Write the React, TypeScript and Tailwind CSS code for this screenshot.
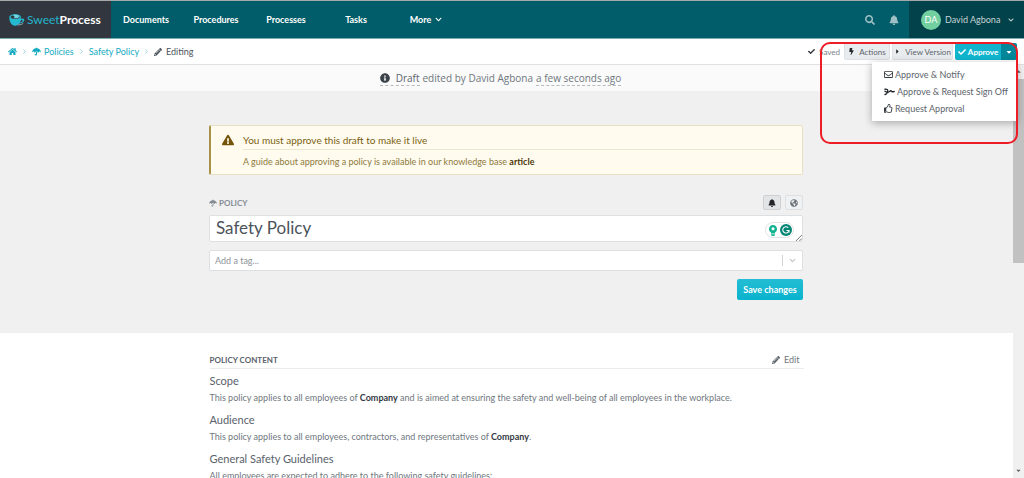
import React from "react";
import {
  FaHome, FaUmbrella, FaPencilAlt, FaChevronDown, FaSearch, FaBell, FaCheck, FaBolt, FaCaretRight,
  FaCaretDown, FaCaretUp, FaRegEnvelope, FaRegThumbsUp, FaInfoCircle, FaExclamationTriangle, FaGlobeAmericas,
} from "react-icons/fa";
import { ChevronDown, ChevronRight } from "lucide-react";

const navItems = ["Documents", "Procedures", "Processes", "Tasks"];

const sections = [
  {
    title: "Scope",
    body: (
      <>
        This policy applies to all employees of <b className="text-[#343a42]">Company</b> and is aimed at ensuring the
        safety and well-being of all employees in the workplace.
      </>
    ),
  },
  {
    title: "Audience",
    body: (
      <>
        This policy applies to all employees, contractors, and representatives of{" "}
        <b className="text-[#343a42]">Company</b>.
      </>
    ),
  },
  {
    title: "General Safety Guidelines",
    body: <>All employees are expected to adhere to the following safety guidelines:</>,
  },
];

function Logo() {
  return (
    <a href="#" aria-label="SweetProcess" className="flex w-[111px] items-center bg-[#32373f] pl-[9px] text-[12px] text-[#22b3cb]">
      <svg viewBox="0 0 48 36" className="mr-[2px] h-3 w-4 shrink-0" aria-hidden="true">
        <path d="M1 10C1 4 9 1 18 1c10 0 18 3 18 9 0 2-1 4-1 5 4-3 11-2 11 3 0 6-8 10-16 11-3 4-8 6-13 6C8 35 1 24 1 10Z" fill="#25b9d0" />
        <path d="M5 9c0-3 5-5 12-5 8 0 15 2 15 5 0 4-6 6-14 6C11 15 5 13 5 9Z" fill="#32373f" />
        <path d="M10 3c9-4 22-1 20 5-2 5-11 6-17 4 6-1 5-5-3-9Z" fill="#6fd3e2" />
        <path d="M36 19c3-2 6-1 5 1-1 3-5 5-9 6 2-2 3-4 4-7Z" fill="#32373f" />
        <path d="M26 31c6-1 13-1 18-5-2 6-10 9-20 8Z" fill="#8b969c" />
      </svg>
      <span>Sweet</span>
      <b className="text-white">Process</b>
    </a>
  );
}

function Header() {
  return (
    <header className="flex h-[39px] shrink-0 border-b border-t border-b-[#7fa9ae] border-t-[#a5a9aa] bg-[#015d69] text-white">
      <Logo />
      <nav className="flex font-bold">
        {navItems.map((n) => (
          <a key={n} href="#" className="flex w-[70px] items-center justify-center">
            {n}
          </a>
        ))}
        <button className="flex w-[70px] items-center justify-center gap-1 font-bold">
          More <FaChevronDown className="size-[7px]" />
        </button>
      </nav>
      <div className="ml-auto flex items-center gap-[14px] pr-[10px] text-[#9fc0c4]">
        <button aria-label="Search"><FaSearch className="size-[10px]" /></button>
        <button aria-label="Notifications"><FaBell className="size-[10px]" /></button>
      </div>
      <button className="flex w-[115px] items-center bg-[#02434b] pl-3 text-[#c5d3d5]">
        <span className="mr-1 flex size-5 items-center justify-center rounded-full bg-[#72cfa0] text-white">DA</span>
        David Agbona
        <FaChevronDown className="ml-[8px] size-[6px]" />
      </button>
    </header>
  );
}

function Crumb() {
  return <ChevronRight className="mx-1 size-[7px] text-[#8ccbd6]" strokeWidth={3} />;
}

function SignOffIcon() {
  return (
    <svg viewBox="0 0 22 16" className="h-2 w-[11px]" fill="none" stroke="#22262b" strokeLinecap="round" strokeLinejoin="round" aria-hidden="true">
      <path d="M2 2.500c4-1 6 1 5.500 4S5 12.500 2 13" strokeWidth="2.600" />
      <path d="M2 6.500c3 2.500 6 2.500 9 .5 2.500-2 3.500-2.500 3.500-1s1 2 6 1" strokeWidth="2.600" />
    </svg>
  );
}

function ApproveMenu() {
  const item = "flex h-[17px] w-full items-center gap-[2px] pl-3 text-left hover:bg-[#f2f4f5]";
  return (
    <div className="absolute right-0 top-[19px] z-10 w-[145px] bg-white py-1 text-[9px] text-[#5c646c] shadow-[0_2px_8px_rgba(0,0,0,0.3)]">
      <button className={item}><FaRegEnvelope className="size-[9px] text-[#33383e]" />Approve &amp; Notify</button>
      <button className={item}><SignOffIcon />Approve &amp; Request Sign Off</button>
      <button className={item}><FaRegThumbsUp className="size-[9px] text-[#33383e]" />Request Approval</button>
    </div>
  );
}

function Toolbar() {
  const grey = "flex h-[17px] items-center justify-center gap-1 rounded-[2px] border border-[#dde1e5] bg-[#e9ecef] whitespace-nowrap text-[8px] text-[#5c646c]";
  return (
    <div className="flex h-[26px] shrink-0 items-center border-b border-[#dfe1e3] bg-white pl-2 pr-[7px] text-[#14abc2]">
      <nav aria-label="Breadcrumb" className="flex items-center">
        <a href="#" aria-label="Home"><FaHome className="size-[9px]" /></a>
        <Crumb />
        <a href="#" className="flex items-center gap-[3px]"><FaUmbrella className="size-[9px]" />Policies</a>
        <Crumb />
        <a href="#">Safety Policy</a>
        <Crumb />
        <span className="flex items-center gap-1 text-[#4b535b]"><FaPencilAlt className="size-[8px]" />Editing</span>
      </nav>
      <div className="relative ml-auto flex items-center">
        <span className="mr-1 flex items-center gap-1 text-[8px] text-[#7b838a]"><FaCheck className="size-[7px] text-[#33383e]" />Saved</span>
        <button className={`${grey} mr-[2px] w-[46px]`}><FaBolt className="size-[7px] text-[#22262a]" />Actions</button>
        <button className={`${grey} mr-[2px] w-[61px]`}><FaCaretRight className="size-[7px] text-[#22262a]" />View Version</button>
        <button className="flex h-[17px] w-[46px] items-center justify-center gap-[2px] rounded-l-[2px] bg-[#10b5cd] text-[8px] font-bold text-white"><FaCheck className="size-[8px]" />Approve</button>
        <button aria-label="More approval options" className="flex h-[17px] w-4 items-center justify-center rounded-r-[2px] bg-[#04879a] text-white"><FaCaretDown className="size-[8px]" /></button>
        <ApproveMenu />
        <div className="pointer-events-none absolute -right-px -top-px z-20 h-[102px] w-[198px] rounded-[10px] border-2 border-[#ee1c25]" />
      </div>
    </div>
  );
}

function Alert() {
  return (
    <div className="flex h-[50px] rounded-[2px] border border-l-2 border-[#e9e0c4] border-l-[#a8924a] bg-[#fffbef] pl-[11px] pr-[10px] text-[#8d7a3c]">
      <FaExclamationTriangle className="mr-[9px] mt-[8px] size-3 shrink-0 text-[#735609]" />
      <div className="flex-1">
        <h2 className="h-6 border-b border-[#eee7d0] pt-1 text-[10px] leading-5 text-[#7a6212]">You must approve this draft to make it live</h2>
        <p className="pt-1 leading-4">A guide about approving a policy is available in our knowledge base <a href="#" className="font-bold text-[#4b3808]">article</a></p>
      </div>
    </div>
  );
}

function PolicyForm() {
  const small = "flex h-[15px] w-[18px] items-center justify-center rounded-[2px] border";
  return (
    <form className="mt-5 flex flex-col" onSubmit={(e) => e.preventDefault()}>
      <div className="flex items-center gap-1">
        <label htmlFor="policy-title" className="mr-auto flex items-center gap-[2px] text-[8px] font-bold text-[#858d94]"><FaUmbrella className="size-2" />POLICY</label>
        <button type="button" aria-label="Notify" className={`${small} border-[#cfd2d5] bg-[#e2e4e6] text-[#22262a]`}><FaBell className="size-[8px]" /></button>
        <button type="button" aria-label="Visibility" className={`${small} border-[#dde0e3] bg-[#f0f1f2] text-[#6d757c]`}><FaGlobeAmericas className="size-[8px]" /></button>
      </div>
      <div className="relative mt-[5px] flex">
        <textarea id="policy-title" rows={1} defaultValue="Safety Policy" className="h-[27px] w-full resize-none overflow-hidden rounded-[2px] border border-[#dde0e3] bg-white px-[6px] text-[17px] leading-6 text-[#4b535b] outline-none" />
        <div className="absolute right-[9px] top-[7px] flex h-4 w-[29px] items-center justify-between rounded-full border border-[#e1e5e7] bg-white px-px pl-[3px]">
          <svg viewBox="0 0 16 22" className="h-[11px] w-2" aria-hidden="true">
            <path d="M8 0a8 8 0 0 0-4 14.900V17h8v-2.100A8 8 0 0 0 8 0Z" fill="#14b392" />
            <circle cx="8" cy="7.500" r="3" fill="#fff" />
            <path d="M4 18.500h8v1.500l-2 2H6l-2-2Z" fill="#14b392" />
          </svg>
          <svg viewBox="0 0 24 24" className="size-3" aria-hidden="true">
            <circle cx="12" cy="12" r="12" fill="#078575" />
            <path d="M16.500 7.500A6.300 6.300 0 1 0 18 13h-5M18 13v4" fill="none" stroke="#fff" strokeWidth="2.200" />
          </svg>
        </div>
        <svg viewBox="0 0 8 8" className="absolute bottom-[1px] right-[1px] size-[7px]" aria-hidden="true"><path d="M1 8 8 1M5 8l3-3" stroke="#666" fill="none" /></svg>
      </div>
      <div className="mt-[8px] flex h-[21px] items-center rounded-[2px] border border-[#dde0e3] bg-white">
        <input aria-label="Add a tag" placeholder="Add a tag..." className="min-w-0 flex-1 bg-transparent pl-[5px] outline-none placeholder:text-[#8f959a]" />
        <button type="button" aria-label="Show tags" className="flex h-[11px] w-5 items-center justify-center border-l border-[#d0d3d6] text-[#bfc3c7]"><ChevronDown className="size-[9px]" strokeWidth={3} /></button>
      </div>
      <button type="submit" className="mt-[8px] h-[21px] w-[66px] self-end rounded-[2px] bg-gradient-to-b from-[#22bdd4] to-[#06b3cd] font-bold text-white">Save changes</button>
    </form>
  );
}

export default function App() {
  return (
    <div className="flex h-screen flex-col overflow-hidden bg-white font-['Lato','Open_Sans',sans-serif] text-[9px] leading-3 text-[#6f777e]">
      <Header />
      <Toolbar />
      <div className="flex min-h-0 flex-1">
        <main className="min-w-0 flex-1">
          <div className="flex h-[26px] items-center justify-center gap-[3px] bg-[#fafafa] pr-3 font-['Open_Sans',sans-serif] text-[10px] leading-[14px]">
            <span className="flex items-center gap-[6px] border-b border-dashed border-[#b5babe] text-[#5c646c]"><FaInfoCircle className="size-[10px] text-[#3b424a]" />Draft</span>
            <span>edited by David Agbona</span>
            <span className="border-b border-dashed border-[#b5babe]">a few seconds ago</span>
          </div>
          <div className="bg-[#f0f0f0] pb-[33px] pr-px pt-[34px]">
            <div className="mx-auto max-w-[594px]">
              <Alert />
              <PolicyForm />
            </div>
          </div>
          <article className="mx-auto max-w-[594px] pt-[19px]">
            <div className="flex h-[17px] items-center justify-between border-b border-[#e9ebec]">
              <h2 className="text-[8px] font-bold text-[#59616a]">POLICY CONTENT</h2>
              <button className="flex items-center gap-1 pr-1"><FaPencilAlt className="size-2 text-[#59616a]" />Edit</button>
            </div>
            {sections.map((s) => (
              <section key={s.title} className="h-[39px] pt-1">
                <h3 className="text-[11px] leading-[15px] text-[#59616a]">{s.title}</h3>
                <p className="pt-1">{s.body}</p>
              </section>
            ))}
          </article>
        </main>
        <div aria-hidden="true" className="flex w-[11px] shrink-0 flex-col items-center justify-between bg-[#f0f0f0] text-[#5c5c5c]">
          <FaCaretUp className="mt-[3px] size-[7px]" />
          <div className="mb-auto mt-1 h-[184px] w-full bg-[#c1c1c1]" />
          <FaCaretDown className="mb-1 size-[7px]" />
        </div>
      </div>
    </div>
  );
}
